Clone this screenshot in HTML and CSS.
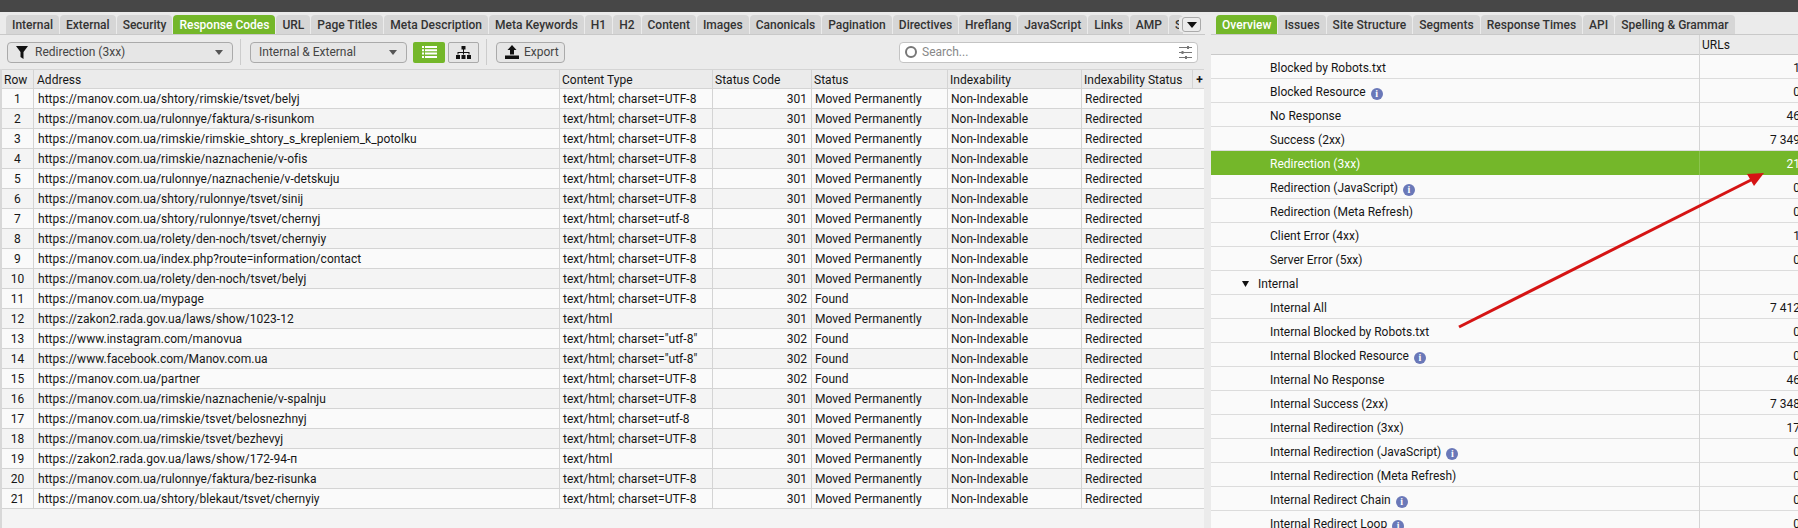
FILE: index.html
```html
<!DOCTYPE html>
<html lang="en">
<head>
<meta charset="utf-8">
<title>Response Codes</title>
<link rel="stylesheet" href="styles.css">
</head>
<body>
<div class="topbar"></div>
<div class="main">
  <section class="left">
    <div class="tabs">
      <span class="tab">Internal</span><span class="tab">External</span><span class="tab">Security</span><span class="tab on">Response Codes</span><span class="tab">URL</span><span class="tab">Page Titles</span><span class="tab">Meta Description</span><span class="tab">Meta Keywords</span><span class="tab">H1</span><span class="tab">H2</span><span class="tab">Content</span><span class="tab">Images</span><span class="tab">Canonicals</span><span class="tab">Pagination</span><span class="tab">Directives</span><span class="tab">Hreflang</span><span class="tab">JavaScript</span><span class="tab">Links</span><span class="tab">AMP</span><span class="tab clip">S</span>
      <span class="more"><svg width="10" height="6" viewBox="0 0 10 6"><path d="M0 0h10L5 6z" fill="#111"/></svg></span>
    </div>
    <div class="toolbar">
      <div class="select s1">
        <svg class="funnel" width="12" height="13" viewBox="0 0 12 13"><path d="M0 0h12L7.500 6v7l-3-2V6z" fill="#111"/></svg>
        <span class="grow">Redirection (3xx)</span>
        <svg width="8" height="5" viewBox="0 0 8 5"><path d="M0 0h8L4 5z" fill="#555"/></svg>
      </div>
      <i class="sep"></i>
      <div class="select s2">
        <span class="grow">Internal &amp; External</span>
        <svg width="8" height="5" viewBox="0 0 8 5"><path d="M0 0h8L4 5z" fill="#555"/></svg>
      </div>
      <div class="view on">
        <svg width="15" height="12" viewBox="0 0 15 12"><path d="M0 0h2v2H0zM3 0h12v2H3zM0 3.300h2v2H0zM3 3.300h12v2H3zM0 6.600h2v2H0zM3 6.600h12v2H3zM0 10h2v2H0zM3 10h12v2H3z" fill="#fff"/></svg>
      </div>
      <div class="view tree">
        <svg width="15" height="13" viewBox="0 0 15 13"><path d="M5.500 0h4v3.500h-4zM7 3.500h1V6h5.500v2.500h-1V7H8v1.500H7V7H2.500v1.500h-1V6H7zM0 9h4v4H0zM5.500 9h4v4h-4zM11 9h4v4h-4z" fill="#111"/></svg>
      </div>
      <i class="sep s3"></i>
      <div class="export">
        <svg width="14" height="14" viewBox="0 0 14 14"><path d="M7 0l4.500 5H9v4.500H5V5H2.500zM0 10.500h14V14H0z" fill="#111"/></svg>
        <span>Export</span>
      </div>
      <div class="search">
        <i class="ring"></i>
        <span class="grow">Search...</span>
        <svg width="13" height="13" viewBox="0 0 13 13"><path d="M0 1.500h13M0 6.500h13M0 11.500h13" stroke="#777" fill="none"/><path d="M8 0h2v3H8zM2.500 5h2v3h-2zM6 10h2v3H6z" fill="#777"/></svg>
      </div>
    </div>
    <div class="grid" id="grid">
      <div class="hrow">
        <span class="c c-row">Row</span><span class="c c-addr">Address</span><span class="c c-type">Content Type</span><span class="c c-code">Status Code</span><span class="c c-stat">Status</span><span class="c c-idx">Indexability</span><span class="c c-ixs">Indexability Status</span><span class="c c-plus">+</span>
      </div>
      <div class="brow"><span class="c c-row ctr">1</span><span class="c c-addr">https://manov.com.ua/shtory/rimskie/tsvet/belyj</span><span class="c c-type">text/html; charset=UTF-8</span><span class="c c-code num">301</span><span class="c c-stat">Moved Permanently</span><span class="c c-idx">Non-Indexable</span><span class="c c-ixs">Redirected</span></div>
      <div class="brow"><span class="c c-row ctr">2</span><span class="c c-addr">https://manov.com.ua/rulonnye/faktura/s-risunkom</span><span class="c c-type">text/html; charset=UTF-8</span><span class="c c-code num">301</span><span class="c c-stat">Moved Permanently</span><span class="c c-idx">Non-Indexable</span><span class="c c-ixs">Redirected</span></div>
      <div class="brow"><span class="c c-row ctr">3</span><span class="c c-addr">https://manov.com.ua/rimskie/rimskie_shtory_s_krepleniem_k_potolku</span><span class="c c-type">text/html; charset=UTF-8</span><span class="c c-code num">301</span><span class="c c-stat">Moved Permanently</span><span class="c c-idx">Non-Indexable</span><span class="c c-ixs">Redirected</span></div>
      <div class="brow"><span class="c c-row ctr">4</span><span class="c c-addr">https://manov.com.ua/rimskie/naznachenie/v-ofis</span><span class="c c-type">text/html; charset=UTF-8</span><span class="c c-code num">301</span><span class="c c-stat">Moved Permanently</span><span class="c c-idx">Non-Indexable</span><span class="c c-ixs">Redirected</span></div>
      <div class="brow"><span class="c c-row ctr">5</span><span class="c c-addr">https://manov.com.ua/rulonnye/naznachenie/v-detskuju</span><span class="c c-type">text/html; charset=UTF-8</span><span class="c c-code num">301</span><span class="c c-stat">Moved Permanently</span><span class="c c-idx">Non-Indexable</span><span class="c c-ixs">Redirected</span></div>
      <div class="brow"><span class="c c-row ctr">6</span><span class="c c-addr">https://manov.com.ua/shtory/rulonnye/tsvet/sinij</span><span class="c c-type">text/html; charset=UTF-8</span><span class="c c-code num">301</span><span class="c c-stat">Moved Permanently</span><span class="c c-idx">Non-Indexable</span><span class="c c-ixs">Redirected</span></div>
      <div class="brow"><span class="c c-row ctr">7</span><span class="c c-addr">https://manov.com.ua/shtory/rulonnye/tsvet/chernyj</span><span class="c c-type">text/html; charset=utf-8</span><span class="c c-code num">301</span><span class="c c-stat">Moved Permanently</span><span class="c c-idx">Non-Indexable</span><span class="c c-ixs">Redirected</span></div>
      <div class="brow"><span class="c c-row ctr">8</span><span class="c c-addr">https://manov.com.ua/rolety/den-noch/tsvet/chernyiy</span><span class="c c-type">text/html; charset=UTF-8</span><span class="c c-code num">301</span><span class="c c-stat">Moved Permanently</span><span class="c c-idx">Non-Indexable</span><span class="c c-ixs">Redirected</span></div>
      <div class="brow"><span class="c c-row ctr">9</span><span class="c c-addr">https://manov.com.ua/index.php?route=information/contact</span><span class="c c-type">text/html; charset=UTF-8</span><span class="c c-code num">301</span><span class="c c-stat">Moved Permanently</span><span class="c c-idx">Non-Indexable</span><span class="c c-ixs">Redirected</span></div>
      <div class="brow"><span class="c c-row ctr">10</span><span class="c c-addr">https://manov.com.ua/rolety/den-noch/tsvet/belyj</span><span class="c c-type">text/html; charset=UTF-8</span><span class="c c-code num">301</span><span class="c c-stat">Moved Permanently</span><span class="c c-idx">Non-Indexable</span><span class="c c-ixs">Redirected</span></div>
      <div class="brow"><span class="c c-row ctr">11</span><span class="c c-addr">https://manov.com.ua/mypage</span><span class="c c-type">text/html; charset=UTF-8</span><span class="c c-code num">302</span><span class="c c-stat">Found</span><span class="c c-idx">Non-Indexable</span><span class="c c-ixs">Redirected</span></div>
      <div class="brow"><span class="c c-row ctr">12</span><span class="c c-addr">https://zakon2.rada.gov.ua/laws/show/1023-12</span><span class="c c-type">text/html</span><span class="c c-code num">301</span><span class="c c-stat">Moved Permanently</span><span class="c c-idx">Non-Indexable</span><span class="c c-ixs">Redirected</span></div>
      <div class="brow"><span class="c c-row ctr">13</span><span class="c c-addr">https://www.instagram.com/manovua</span><span class="c c-type">text/html; charset="utf-8"</span><span class="c c-code num">302</span><span class="c c-stat">Found</span><span class="c c-idx">Non-Indexable</span><span class="c c-ixs">Redirected</span></div>
      <div class="brow"><span class="c c-row ctr">14</span><span class="c c-addr">https://www.facebook.com/Manov.com.ua</span><span class="c c-type">text/html; charset="utf-8"</span><span class="c c-code num">302</span><span class="c c-stat">Found</span><span class="c c-idx">Non-Indexable</span><span class="c c-ixs">Redirected</span></div>
      <div class="brow"><span class="c c-row ctr">15</span><span class="c c-addr">https://manov.com.ua/partner</span><span class="c c-type">text/html; charset=UTF-8</span><span class="c c-code num">302</span><span class="c c-stat">Found</span><span class="c c-idx">Non-Indexable</span><span class="c c-ixs">Redirected</span></div>
      <div class="brow"><span class="c c-row ctr">16</span><span class="c c-addr">https://manov.com.ua/rimskie/naznachenie/v-spalnju</span><span class="c c-type">text/html; charset=UTF-8</span><span class="c c-code num">301</span><span class="c c-stat">Moved Permanently</span><span class="c c-idx">Non-Indexable</span><span class="c c-ixs">Redirected</span></div>
      <div class="brow"><span class="c c-row ctr">17</span><span class="c c-addr">https://manov.com.ua/rimskie/tsvet/belosnezhnyj</span><span class="c c-type">text/html; charset=utf-8</span><span class="c c-code num">301</span><span class="c c-stat">Moved Permanently</span><span class="c c-idx">Non-Indexable</span><span class="c c-ixs">Redirected</span></div>
      <div class="brow"><span class="c c-row ctr">18</span><span class="c c-addr">https://manov.com.ua/rimskie/tsvet/bezhevyj</span><span class="c c-type">text/html; charset=UTF-8</span><span class="c c-code num">301</span><span class="c c-stat">Moved Permanently</span><span class="c c-idx">Non-Indexable</span><span class="c c-ixs">Redirected</span></div>
      <div class="brow"><span class="c c-row ctr">19</span><span class="c c-addr">https://zakon2.rada.gov.ua/laws/show/172-94-п</span><span class="c c-type">text/html</span><span class="c c-code num">301</span><span class="c c-stat">Moved Permanently</span><span class="c c-idx">Non-Indexable</span><span class="c c-ixs">Redirected</span></div>
      <div class="brow"><span class="c c-row ctr">20</span><span class="c c-addr">https://manov.com.ua/rulonnye/faktura/bez-risunka</span><span class="c c-type">text/html; charset=UTF-8</span><span class="c c-code num">301</span><span class="c c-stat">Moved Permanently</span><span class="c c-idx">Non-Indexable</span><span class="c c-ixs">Redirected</span></div>
      <div class="brow"><span class="c c-row ctr">21</span><span class="c c-addr">https://manov.com.ua/shtory/blekaut/tsvet/chernyiy</span><span class="c c-type">text/html; charset=UTF-8</span><span class="c c-code num">301</span><span class="c c-stat">Moved Permanently</span><span class="c c-idx">Non-Indexable</span><span class="c c-ixs">Redirected</span></div>
    </div>
  </section>
  <section class="right">
    <div class="tabs rtabs">
      <span class="tab on">Overview</span><span class="tab">Issues</span><span class="tab">Site Structure</span><span class="tab">Segments</span><span class="tab">Response Times</span><span class="tab">API</span><span class="tab">Spelling &amp; Grammar</span>
    </div>
    <div class="ohead"><span class="oname"></span><span class="oval h">URLs</span></div>
    <div class="orow"><span class="oname">Blocked by Robots.txt</span><span class="oval">1</span></div>
    <div class="orow"><span class="oname">Blocked Resource <i class="info">i</i></span><span class="oval">0</span></div>
    <div class="orow"><span class="oname">No Response</span><span class="oval">46</span></div>
    <div class="orow"><span class="oname">Success (2xx)</span><span class="oval">7 349</span></div>
    <div class="orow sel"><span class="oname">Redirection (3xx)</span><span class="oval">21</span></div>
    <div class="orow"><span class="oname">Redirection (JavaScript) <i class="info">i</i></span><span class="oval">0</span></div>
    <div class="orow"><span class="oname">Redirection (Meta Refresh)</span><span class="oval">0</span></div>
    <div class="orow"><span class="oname">Client Error (4xx)</span><span class="oval">1</span></div>
    <div class="orow"><span class="oname">Server Error (5xx)</span><span class="oval">0</span></div>
    <div class="orow group"><span class="oname"><svg class="tri" width="7" height="6" viewBox="0 0 7 6"><path d="M0 0h7L3.500 6z" fill="#111"/></svg>Internal</span><span class="oval"></span></div>
    <div class="orow"><span class="oname">Internal All</span><span class="oval">7 412</span></div>
    <div class="orow"><span class="oname">Internal Blocked by Robots.txt</span><span class="oval">0</span></div>
    <div class="orow"><span class="oname">Internal Blocked Resource <i class="info">i</i></span><span class="oval">0</span></div>
    <div class="orow"><span class="oname">Internal No Response</span><span class="oval">46</span></div>
    <div class="orow"><span class="oname">Internal Success (2xx)</span><span class="oval">7 348</span></div>
    <div class="orow"><span class="oname">Internal Redirection (3xx)</span><span class="oval">17</span></div>
    <div class="orow"><span class="oname">Internal Redirection (JavaScript) <i class="info">i</i></span><span class="oval">0</span></div>
    <div class="orow"><span class="oname">Internal Redirection (Meta Refresh)</span><span class="oval">0</span></div>
    <div class="orow"><span class="oname">Internal Redirect Chain <i class="info">i</i></span><span class="oval">0</span></div>
    <div class="orow"><span class="oname">Internal Redirect Loop <i class="info">i</i></span><span class="oval">0</span></div>
  </section>
</div>
<svg class="arrow" width="1798" height="528" viewBox="0 0 1798 528">
  <path d="M1459 327L1755 178" stroke="#d51414" stroke-width="3" fill="none"/>
  <path d="M1764 173L1747 174L1754 186z" fill="#d51414"/>
</svg>
</body>
</html>
```
FILE: styles.css
```css
* { box-sizing: border-box; }
html, body { margin: 0; height: 100%; overflow: hidden; }
body {
  width: 1798px; height: 528px; position: relative;
  background: #e9e9e9; color: #161616;
  font: 12px/20px Roboto, "Liberation Sans", sans-serif;
}
.topbar { height: 12px; background: #474747; }
.main { display: flex; height: 516px; padding-top: 3px; background: #ebebeb; }
.left { width: 1205px; flex: none; display: flex; flex-direction: column; }
.right { flex: 1; margin-left: 6px; min-width: 0; }
.tabs { display: flex; height: 20px; gap: 1px; padding-left: 6px; border-bottom: 1px solid #c9c9c9; position: relative; overflow: hidden; flex: none; }
.tab {
  height: 19px; line-height: 21px; padding: 0 6px; background: #d6d6d6;
  border-radius: 4px 4px 0 0; color: #333; font-weight: 500; white-space: nowrap; flex: none;
}
.tab.on { background: #74b72a; color: #fff; }
.clip { width: 14px; overflow: hidden; }
.more {
  position: absolute; left: 1182px; top: 2px; width: 19px; height: 15px;
  background: #ececec; border: 1px solid #aaa; border-radius: 3px;
  display: flex; align-items: center; justify-content: center;
  box-shadow: -3px 0 0 #ebebeb;
}
.rtabs { padding-left: 5px; letter-spacing: .02px; }
.toolbar { height: 34px; display: flex; align-items: center; padding-left: 7px; flex: none; }
.select {
  height: 21px; border: 1px solid #aaa; border-radius: 4px; background: #e6e6e6;
  display: flex; align-items: center; color: #444; padding-right: 9px;
}
.grow { flex: 1; }
.s1 { width: 226px; padding-left: 8px; }
.funnel { margin-right: 7px; }
.s2 { width: 157px; padding-left: 8px; }
.sep { width: 1px; height: 26px; background: #ccc; margin: 0 9px 0 7px; }
.s3 { margin: 0 9px 0 7px; }
.view { height: 21px; width: 32px; display: flex; align-items: center; justify-content: center; margin-left: 6px; border-radius: 2px; }
.view.on { background: #74b72a; }
.tree { width: 31px; margin-left: 3px; border: 1px solid #aaa; background: #e6e6e6; }
.export {
  width: 69px; height: 21px; border: 1px solid #aaa; border-radius: 4px; background: #e6e6e6;
  display: flex; align-items: center; gap: 5px; padding-left: 8px; color: #444;
}
.search {
  width: 299px; height: 21px; margin-left: 334px; background: #fff; border: 1px solid #c4c4c4; border-radius: 4px;
  display: flex; align-items: center; padding: 0 5px; color: #888;
}
.ring { width: 12px; height: 12px; border: 2px solid #777; border-radius: 50%; margin-right: 5px; }
.grid { width: 1204px; flex: 1; background: #f4f4f4; border-left: 2px solid #d8d8d8; }
.hrow, .brow { display: flex; height: 20px; border-bottom: 1px solid #d4d4d4; letter-spacing: .025px; }
.hrow { background: #ebebeb; border-top: 1px solid #d4d4d4; }
.brow { background: #fafafa; }
.brow:nth-child(odd) { background: #f4f4f4; }
.c { display: block; padding: 0 2px 0 3px; border-right: 1px solid #d4d4d4; white-space: nowrap; overflow: hidden; flex: none; line-height: 21px; }
.hrow .c { padding-left: 2px; line-height: 20px; }
.brow .c-addr { padding-left: 4px; }
.hrow .c-addr { padding-left: 3px; }
.c-row { width: 32px; }
.c-addr { width: 526px; }
.c-type { width: 153px; }
.c-code { width: 99px; }
.c-stat { width: 136px; }
.c-idx { width: 134px; }
.c-ixs { width: 111px; }
.c-plus { width: 11px; font-weight: 700; padding: 0; text-align: center; border-right: 0; }
.brow .c-ixs { width: 122px; border-right: 0; }
.ctr { text-align: center; }
.brow .c-row { padding: 0; }
.num { text-align: right; padding-right: 4px; }
.ohead, .orow { display: grid; grid-template-columns: 488px 101px; width: 589px; }
.ohead { height: 20px; background: #ebebeb; border-bottom: 1px solid #c9c9c9; }
.orow { height: 24px; background: #fafafa; border-bottom: 1px solid #dcdcdc; line-height: 26px; }
.oname { padding-left: 59px; white-space: nowrap; }
.oval { border-left: 1px solid #d4d4d4; text-align: right; }
.oval.h { text-align: left; padding-left: 2px; line-height: 21px; }
.sel { background: #74b72a; color: #fff; border-bottom-color: #74b72a; }
.sel .oval { border-left-color: #8cc44e; }
.group .oname { padding-left: 31px; }
.tri { margin-right: 9px; vertical-align: 1px; }
.info {
  display: inline-block; width: 12px; height: 12px; border-radius: 50%; background: #6a78b8; color: #fff;
  font: 700 10px/12px "Liberation Serif", serif; text-align: center; margin-left: 2px; vertical-align: -1px;
}
.arrow { position: absolute; left: 0; top: 0; pointer-events: none; }
```
